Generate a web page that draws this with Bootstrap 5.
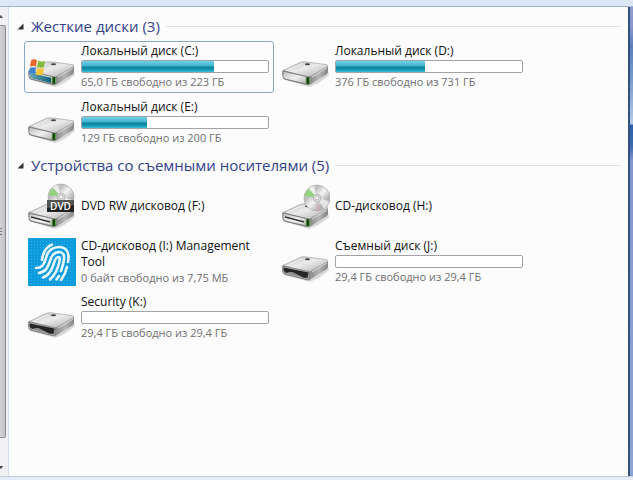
<!DOCTYPE html>
<html lang="ru">
<head>
<meta charset="utf-8">
<meta name="viewport" content="width=device-width, initial-scale=1">
<title>Компьютер</title>
<link href="https://cdn.jsdelivr.net/npm/bootstrap@5.3.0/dist/css/bootstrap.min.css" rel="stylesheet">
<style>
body{font-family:"Open Sans","Noto Sans",sans-serif;font-size:12px;line-height:16px;color:#111;background:#fcfcfd}
.top-strip{height:7px;background:#dce8f5;border-bottom:1px solid #a3b5c8}
.bottom-strip{height:4px;background:#e4edf7;border-top:1px solid #c3cedc}
.tree-scroll{width:9px;background:#f1f1f3;border-right:1px solid #d3dff0;padding-right:2px}
.scroll-arrow{height:18px}
.scroll-arrow svg{display:block}
.scroll-thumb{background:linear-gradient(90deg,#d4d4d6,#c2c2c5);border:1px solid #8d8f93;border-left:0;border-radius:0 2px 2px 0}
.scroll-foot{height:38px}
.window-edge{width:5px;border-left:2px solid #34517e;background:linear-gradient(#8c9bd0 0,#8796cc 20px,#5b80bd 40px,#7499cc 70px,#b4cde8 117px,#2c5ea8 118px,#3f6cb2 140px,#8397cf 154px,#8da3d6 100%)}
.files{padding:4px 7px 0 8px}
.group-head{height:30px;font-size:15px;line-height:20px;color:#33428a;gap:6px}
.group-head::after{content:"";flex:1;height:1px;background:#dfe3ea}
.group-toggle{color:inherit;background:none;border:0;padding:0;gap:7px}
.drives{display:grid;grid-template-columns:repeat(auto-fill,250px);gap:4px;padding:0 0 1px 7px}
.drive{height:52px;padding:1px 4px 1px 3px;gap:5px;border:1px solid transparent;border-radius:3px;color:#111;text-decoration:none}
.drive.selected{border-color:#8aa9c9}
.drive svg{width:48px;height:48px;flex:none}
.drive.media{align-items:center}
.muted{font-size:11px;color:#6f6f6f}
.progress.space{height:13px;margin:1px 0;border:1px solid #a3a3a6;border-radius:2px;background:#fff}
.space .progress-bar{background:linear-gradient(#6fd0e4 0,#45b6d1 42%,#0c84a2 54%,#138fac 75%,#3dc0da 100%)}
</style>
<script src="https://cdn.jsdelivr.net/npm/bootstrap@5.3.0/dist/js/bootstrap.bundle.min.js"></script>
</head>
<body class="d-flex flex-column vh-100 overflow-hidden">
<svg width="0" height="0" class="position-absolute" aria-hidden="true">
<defs>
<linearGradient id="gTop" x1="0" y1="0" x2="1" y2="1"><stop offset="0" stop-color="#b4b4b4"/><stop offset=".45" stop-color="#ececec"/><stop offset="1" stop-color="#b0b0b0"/></linearGradient>
<linearGradient id="gSide" x1="0" y1="0" x2="1" y2="0"><stop offset="0" stop-color="#6a6a6a"/><stop offset=".6" stop-color="#8a8a8a"/><stop offset=".8" stop-color="#b5b5b5"/><stop offset="1" stop-color="#858585"/></linearGradient>
<linearGradient id="gFront" x1="0" y1="0" x2="1" y2="1"><stop offset="0" stop-color="#bbb"/><stop offset=".5" stop-color="#f0f0f0"/><stop offset="1" stop-color="#aaa"/></linearGradient>
<linearGradient id="gDisc" x1="0" y1="0" x2="1" y2="1"><stop offset="0" stop-color="#e8e8e8"/><stop offset=".3" stop-color="#bdbdbd"/><stop offset=".5" stop-color="#f5f5f5"/><stop offset=".75" stop-color="#adadad"/><stop offset="1" stop-color="#d9d9d9"/></linearGradient>
<linearGradient id="gTeal" x1="0" y1="0" x2="1" y2="0"><stop offset="0" stop-color="#6aa8b4"/><stop offset="1" stop-color="#14607a"/></linearGradient>
<g id="shell">
<path d="M3 37L27 44Q37 41 47 32L46 28z" fill="#000" opacity=".14"/>
<path d="M1 27Q0 28 1 34Q1 36 3 36.500L25 42Q27 42.500 29 41L45 31Q46 30 46 28V24L44 22z" fill="url(#gSide)"/>
<path d="M1 27.500L18 19.500Q20 18.500 23 18.800L44 21.500Q47 22 45 24L29 33Q27 34.300 24 33.500z" fill="url(#gTop)" stroke="#999" stroke-width=".6"/>
<path d="M5 27.500L20 20.500" stroke="#fff" stroke-width=".8" opacity=".8"/>
<path d="M30 34L45 25" stroke="#e8e8e8" stroke-width=".8"/>
<ellipse cx="25.500" cy="21.300" rx="2.600" ry="1" fill="#444"/>
</g>
<g id="face">
<path d="M1 28L26 34V41.500L3 36Q1 35.500 1 33.500z" fill="url(#gFront)" stroke="#777" stroke-width=".9"/>
<path d="M24 34.500L27.500 34V41L24 40.500z" fill="#173c14"/><path d="M24.200 35V40.300M27.400 34.500V40.500" stroke="#58b83e" stroke-width=".9"/>
</g>
<g id="hdd"><use href="#shell"/><use href="#face"/></g>
<g id="usb"><use href="#shell"/><path d="M.5 28L27 33.500V42L3 36.500Q1 36 .5 33.500z" fill="#a8a8a8" stroke="#777" stroke-width=".6"/><path d="M1.500 29.500L26.500 34.500L25.500 40L21 39.500L10 34L4 35Q2 34 1.500 32z" fill="#262626"/><path d="M4 35L10 34L22 40z" fill="#8c8c8c"/></g>
<g id="optical"><use href="#hdd"/><path d="M3 32L22 37" stroke="#333" stroke-width="1.500"/><path d="M3 33.500L22 38.500" stroke="#fff" stroke-width=".7"/></g>
<g id="disc"><circle cx="0" cy="0" r="13" fill="url(#gDisc)" stroke="#aaa" stroke-width=".7"/><path d="M0 0L-12.500 -2A12.500 12.500 0 0 1 -8 -9.500z" fill="#86d66b" opacity=".75"/><path d="M0 0L-8 -9.500A12.500 12.500 0 0 1 -3 -12z" fill="#fff" opacity=".7"/><path d="M0 0L12 3A12.500 12.500 0 0 1 7 10.500z" fill="#fff" opacity=".65"/><path d="M0 0L4 12A12.500 12.500 0 0 1 -1 12.600z" fill="#dba7bd" opacity=".35"/><circle r="4" fill="#ddd" stroke="#aaa" stroke-width=".7"/><circle r="1.900" fill="#fff" stroke="#999" stroke-width=".6"/></g>
</defs>
</svg>

<div class="top-strip flex-shrink-0"></div>
<div class="d-flex flex-fill">
  <aside class="tree-scroll d-flex flex-column flex-shrink-0" aria-hidden="true">
    <div class="scroll-arrow"><svg width="6" height="18"><path d="M-2 11L1 8L3 11z" fill="#555"/></svg></div>
    <div class="scroll-thumb flex-fill d-flex align-items-center"><svg width="3" height="10"><path d="M0 1.500H2M0 4.500H2M0 7.500H2" stroke="#777"/></svg></div>
    <div class="scroll-foot"><svg width="6" height="38"><path d="M-2 28H3L1 31z" fill="#444"/></svg></div>
  </aside>
  <main class="files flex-fill">
    <section>
      <h2 class="group-head d-flex align-items-center m-0 fw-normal">
        <button class="group-toggle d-flex align-items-center" type="button" data-bs-toggle="collapse" data-bs-target="#hardDrives" aria-expanded="true" aria-controls="hardDrives"><svg width="7" height="7" aria-hidden="true"><path d="M6.500 .5V6.500H.5z" fill="#333"/></svg>Жесткие диски (3)</button>
      </h2>
      <div class="collapse show" id="hardDrives"><div class="drives">
        <a class="drive selected d-flex" href="#c">
          <svg viewBox="0 0 48 48" aria-hidden="true"><use href="#hdd"/><path d="M2 29.500L23 34.800V40L4 35.500Q2 35 2 33z" fill="url(#gTeal)"/>
          <path d="M3 17.500Q6 15.500 9 17L8 23.500Q5 22.500 2 24z" fill="#e8672b"/><path d="M10 17.500Q14 19.500 17 17.500L16 24Q13 25.500 9 24z" fill="#83ba3b"/><path d="M1.800 25Q5 23.500 8 24.800L7 31Q4 29.500 1 31z" fill="#3c83cf"/><path d="M9 25Q12 26.500 16 25L15 31.500Q12 33 8 31.500z" fill="#f5c537"/></svg>
          <div class="flex-fill"><div>Локальный диск (C:)</div><div class="progress space" role="progressbar" aria-label="Занято на диске C" aria-valuenow="71" aria-valuemin="0" aria-valuemax="100"><div class="progress-bar" style="width:71%"></div></div><div class="muted">65,0 ГБ свободно из 223 ГБ</div></div>
        </a>
        <a class="drive d-flex" href="#d">
          <svg viewBox="0 0 48 48" aria-hidden="true"><use href="#hdd"/></svg>
          <div class="flex-fill"><div>Локальный диск (D:)</div><div class="progress space" role="progressbar" aria-label="Занято на диске D" aria-valuenow="48" aria-valuemin="0" aria-valuemax="100"><div class="progress-bar" style="width:48%"></div></div><div class="muted">376 ГБ свободно из 731 ГБ</div></div>
        </a>
        <a class="drive d-flex" href="#e">
          <svg viewBox="0 0 48 48" aria-hidden="true"><use href="#hdd"/></svg>
          <div class="flex-fill"><div>Локальный диск (E:)</div><div class="progress space" role="progressbar" aria-label="Занято на диске E" aria-valuenow="35" aria-valuemin="0" aria-valuemax="100"><div class="progress-bar" style="width:35%"></div></div><div class="muted">129 ГБ свободно из 200 ГБ</div></div>
        </a>
      </div></div>
    </section>
    <section>
      <h2 class="group-head d-flex align-items-center m-0 fw-normal">
        <button class="group-toggle d-flex align-items-center" type="button" data-bs-toggle="collapse" data-bs-target="#removable" aria-expanded="true" aria-controls="removable"><svg width="7" height="7" aria-hidden="true"><path d="M6.500 .5V6.500H.5z" fill="#333"/></svg>Устройства со съемными носителями (5)</button>
      </h2>
      <div class="collapse show" id="removable"><div class="drives">
        <a class="drive media d-flex" href="#f">
          <svg viewBox="0 0 48 48" aria-hidden="true"><use href="#optical" y="3"/><use href="#disc" x="33" y="15"/><path d="M19 18H46V30H19z" fill="#222"/><path d="M19 18H46V23L19 26z" fill="#555"/><text x="32.500" y="28" text-anchor="middle" font-family="Open Sans,sans-serif" font-size="10" font-weight="600" fill="#fff">DVD</text></svg>
          <div>DVD RW дисковод (F:)</div>
        </a>
        <a class="drive media d-flex" href="#h">
          <svg viewBox="0 0 48 48" aria-hidden="true"><use href="#optical" y="3"/><use href="#disc" x="35" y="16"/></svg>
          <div>CD-дисковод (H:)</div>
        </a>
        <a class="drive d-flex" href="#i">
          <svg viewBox="0 0 48 48" aria-hidden="true"><defs><pattern id="dots" width="3" height="3" patternUnits="userSpaceOnUse"><rect width="3" height="3" fill="#0c9bdc"/><rect width="1" height="1" fill="#36aee4"/></pattern></defs><rect width="48" height="48" fill="url(#dots)"/>
          <g fill="none" stroke="#e6f6fd" stroke-width="2.600" stroke-linecap="round"><path d="M8 30C15 30 16 26 18 20C20 12 25 9 31 9C38 9 41 14 40.500 20L40 24"/><path d="M11 35C18 34 20 29 22 23C24 16 27 14 31 14C35 14 36.500 17 36 21C35.500 26 34 30 33 33"/><path d="M15 39.500C22 37 24 31 26 25C27.500 20 29 19 30.500 19C32 19 32 21 31.500 23C30 31 27 37 22 41.500"/><path d="M39 29C38 34 36 38 33 42"/><path d="M31 38L28.500 41.500"/><path d="M14 22C15 15 18 9 24 6.500"/></g></svg>
          <div><div>CD-дисковод (I:) Management Tool</div><div class="muted">0 байт свободно из 7,75 МБ</div></div>
        </a>
        <a class="drive d-flex" href="#j">
          <svg viewBox="0 0 48 48" aria-hidden="true"><use href="#usb"/></svg>
          <div class="flex-fill"><div>Съемный диск (J:)</div><div class="progress space" role="progressbar" aria-label="Занято на диске J" aria-valuenow="0" aria-valuemin="0" aria-valuemax="100"></div><div class="muted">29,4 ГБ свободно из 29,4 ГБ</div></div>
        </a>
        <a class="drive d-flex" href="#k">
          <svg viewBox="0 0 48 48" aria-hidden="true"><use href="#usb"/></svg>
          <div class="flex-fill"><div>Security (K:)</div><div class="progress space" role="progressbar" aria-label="Занято на диске K" aria-valuenow="0" aria-valuemin="0" aria-valuemax="100"></div><div class="muted">29,4 ГБ свободно из 29,4 ГБ</div></div>
        </a>
      </div></div>
    </section>
  </main>
  <div class="window-edge flex-shrink-0"></div>
</div>
<div class="bottom-strip flex-shrink-0"></div>
</body>
</html>
